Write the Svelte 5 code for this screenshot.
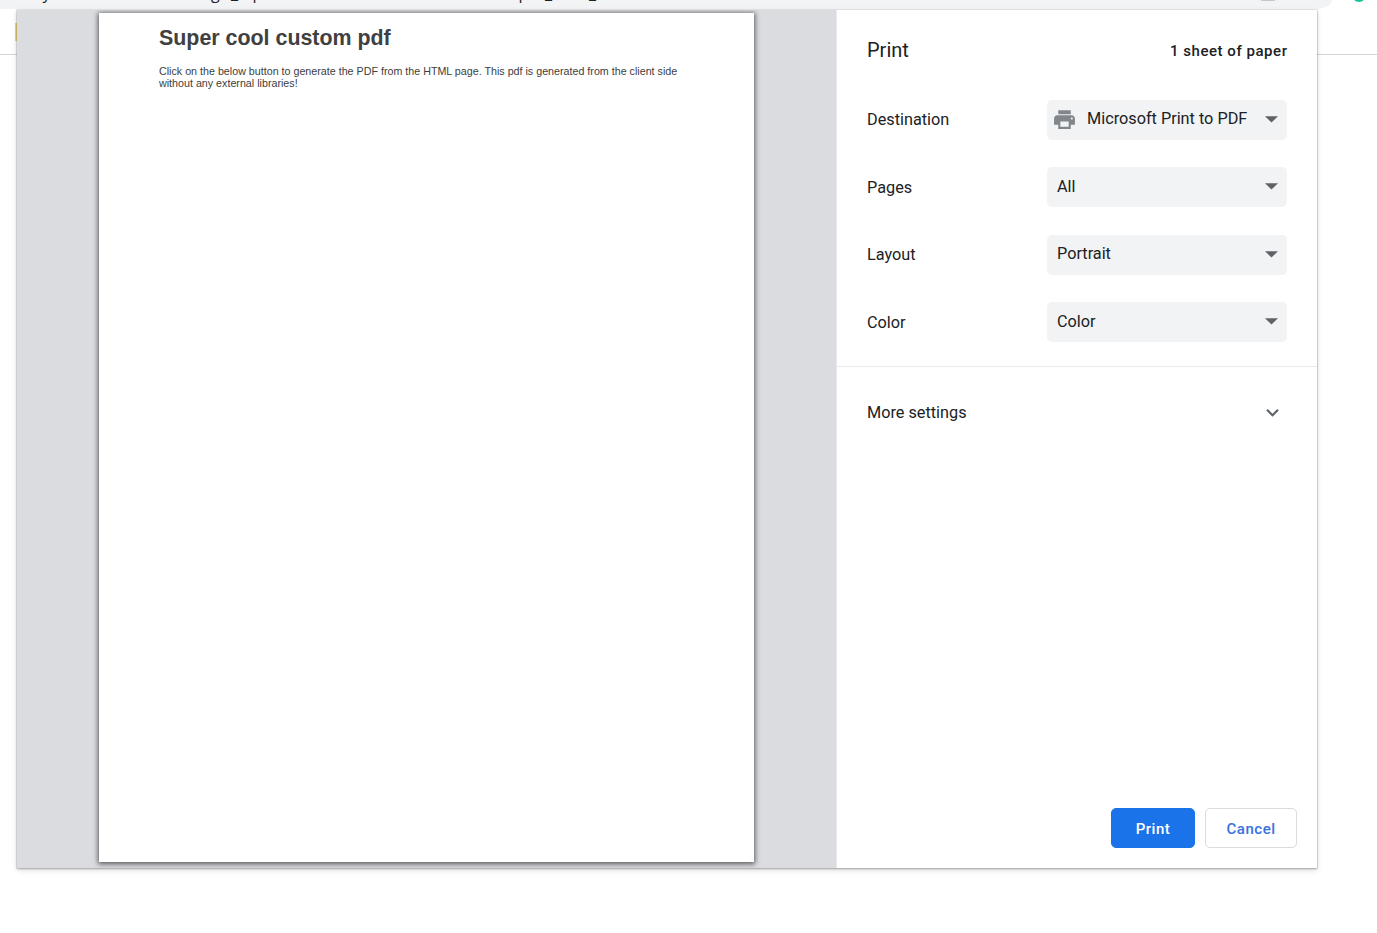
<script>
  const settings = [
    { label: 'Destination', value: 'Microsoft Print to PDF', icon: true },
    { label: 'Pages', value: 'All' },
    { label: 'Layout', value: 'Portrait' },
    { label: 'Color', value: 'Color' }
  ];
  // Parts of the address that reach below the clipped edge of the window.
  const address = [
    { text: 'y', x: 42.5 },
    { text: 'g', x: 211 },
    { text: '_', x: 231 },
    { text: 'p', x: 252.5 },
    { text: 'p', x: 518.5 },
    { text: '_', x: 545 },
    { text: '_', x: 589 }
  ];
</script>

<div class="browser">
  <div class="toolbar">
    <div class="omnibox">
      {#each address as part}
        <span style="left: {part.x}px">{part.text}</span>
      {/each}
      <i class="action"></i>
    </div>
    <i class="extension"></i>
    <i class="bookmark"></i>
  </div>

  <div class="dialog">
    <section class="preview">
      <article class="page">
        <h1>Super cool custom pdf</h1>
        <p>Click on the below button to generate the PDF from the HTML page. This pdf is generated from the client side<br />without any external libraries!</p>
      </article>
    </section>

    <aside>
      <header>
        <h2>Print</h2>
        <span>1 sheet of paper</span>
      </header>
      <div class="settings">
        {#each settings as s}
          <div class="row">
            <span class="label">{s.label}</span>
            <div class="select">
              {#if s.icon}
                <svg class="printer" viewBox="0 0 24 24" width="25" height="25"><path fill="#80868b" d="M19 8H5c-1.66 0-3 1.34-3 3v6h4v4h12v-4h4v-6c0-1.66-1.34-3-3-3zm-3 11H8v-5h8v5zm3-7c-.55 0-1-.45-1-1s.45-1 1-1 1 .45 1 1-.45 1-1 1zm-1-9H6v4h12V3z" /></svg>
              {/if}
              <span class="value">{s.value}</span>
              <svg class="arrow" viewBox="0 0 13 7" width="13" height="7"><path fill="#5f6368" d="M0 .3h13L6.5 6.5z" /></svg>
            </div>
          </div>
        {/each}
      </div>
      <div class="more">
        <span class="label">More settings</span>
        <svg viewBox="0 0 24 24" width="25" height="25"><path fill="#5f6368" d="M16.59 8.59L12 13.17 7.41 8.59 6 10l6 6 6-6z" /></svg>
      </div>
      <footer>
        <button class="primary">Print</button>
        <button>Cancel</button>
      </footer>
    </aside>
  </div>
</div>

<style>
  :global(body) { background: #fff; overflow: hidden; }
  * { box-sizing: border-box; }
  .browser {
    position: relative;
    height: 933px;
    padding: 10px 60px 0 17px;
    overflow: hidden;
    font-family: Roboto, sans-serif;
    color: #202124;
  }
  .toolbar {
    position: absolute;
    inset: 0 0 auto;
    height: 55px;
    border-bottom: 1px solid #d5d6d8;
  }
  .omnibox {
    position: relative;
    width: 1332px;
    height: 9px;
    overflow: hidden;
    background: #f1f3f4;
    border-bottom-right-radius: 17px 9px;
  }
  .omnibox span {
    position: absolute;
    top: -19px;
    font: 16px/24px "Open Sans", sans-serif;
  }
  .action {
    position: absolute;
    left: 1261px;
    top: 0;
    width: 14px;
    height: 1px;
    background: #c5c7ca;
  }
  .extension {
    position: absolute;
    left: 1352px;
    top: -12px;
    width: 14px;
    height: 14px;
    border-radius: 50%;
    background: #15c39a;
  }
  .bookmark {
    position: absolute;
    left: 15px;
    top: 23px;
    width: 8px;
    height: 18px;
    background: #f5d978;
  }
  .dialog {
    position: relative;
    display: flex;
    height: 858px;
    background: #fff;
    box-shadow: 0 0 0 1px rgba(0, 0, 0, .08), 0 1px 2px rgba(0, 0, 0, .22), 0 2px 6px rgba(0, 0, 0, .14);
  }
  .preview {
    flex: 1;
    padding: 3px 0 0 82px;
    overflow: hidden;
    background: #dadce0;
  }
  .page {
    width: 655px;
    height: 849px;
    padding: 12px 60px;
    background: #fff;
    color: #404040;
    font-family: "Liberation Sans", Arial, sans-serif;
    box-shadow: 0 1px 5px 1px rgba(0, 0, 0, .6);
  }
  h1 { margin: 0; font-size: 21.4px; line-height: 26px; white-space: nowrap; }
  p { margin: 14px 0 0; font-size: 10.71px; line-height: 12px; white-space: nowrap; }
  aside {
    display: flex;
    flex-direction: column;
    width: 481px;
    border-left: 1px solid #e8eaed;
  }
  header {
    display: flex;
    align-items: center;
    justify-content: space-between;
    height: 80px;
    padding: 0 30px;
  }
  h2 { margin: 0; font-size: 20px; font-weight: 400; }
  header span { font-size: 15px; font-weight: 500; letter-spacing: .54px; margin-right: -.5px; padding-top: 2px; }
  .settings {
    display: flex;
    flex-direction: column;
    gap: 27.5px;
    height: 277px;
    padding: 9.9px 30px 0;
    border-bottom: 1px solid #e8eaed;
  }
  .row { display: flex; align-items: center; justify-content: space-between; height: 40px; flex: none; }
  .label { font-size: 16.25px; }
  .select {
    display: flex;
    align-items: center;
    width: 240px;
    height: 40px;
    padding: 0 9px 2px 10px;
    border-radius: 5px;
    background: #f1f3f4;
  }
  .value { flex: 1; font-size: 16.25px; white-space: nowrap; }
  .printer { margin: 1px 10px 0 -5px; }
  .arrow { margin-top: .4px; }
  .more {
    display: flex;
    align-items: center;
    justify-content: space-between;
    height: 90px;
    padding: 0 32px 0 30px;
  }
  footer { display: flex; justify-content: flex-end; gap: 10px; margin-top: auto; padding: 20px; }
  button {
    width: 92px;
    height: 40px;
    padding: 1px 0 0;
    border: 1px solid #dadce0;
    border-radius: 5px;
    background: #fff;
    color: #3871e0;
    font: 500 15px Roboto, sans-serif;
    letter-spacing: .54px;
  }
  .primary { width: 84px; border-color: #1a73e8; background: #1a73e8; color: #fff; }
</style>
